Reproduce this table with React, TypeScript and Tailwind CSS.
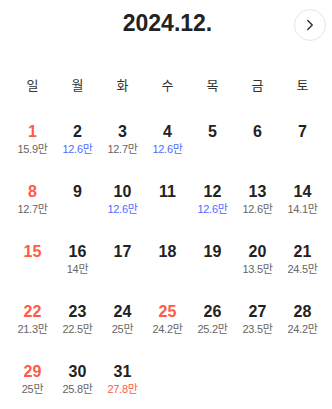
import { ChevronRight } from "lucide-react";

type Tone = "gray" | "blue" | "red";

interface DayData {
  day: number;
  price?: string;
  tone?: Tone;
}

const WEEKDAYS = ["일", "월", "화", "수", "목", "금", "토"];

const DAYS: DayData[] = [
  { day: 1, price: "15.9만", tone: "gray" },
  { day: 2, price: "12.6만", tone: "blue" },
  { day: 3, price: "12.7만", tone: "gray" },
  { day: 4, price: "12.6만", tone: "blue" },
  { day: 5 },
  { day: 6 },
  { day: 7 },
  { day: 8, price: "12.7만", tone: "gray" },
  { day: 9 },
  { day: 10, price: "12.6만", tone: "blue" },
  { day: 11 },
  { day: 12, price: "12.6만", tone: "blue" },
  { day: 13, price: "12.6만", tone: "gray" },
  { day: 14, price: "14.1만", tone: "gray" },
  { day: 15 },
  { day: 16, price: "14만", tone: "gray" },
  { day: 17 },
  { day: 18 },
  { day: 19 },
  { day: 20, price: "13.5만", tone: "gray" },
  { day: 21, price: "24.5만", tone: "gray" },
  { day: 22, price: "21.3만", tone: "gray" },
  { day: 23, price: "22.5만", tone: "gray" },
  { day: 24, price: "25만", tone: "gray" },
  { day: 25, price: "24.2만", tone: "gray" },
  { day: 26, price: "25.2만", tone: "gray" },
  { day: 27, price: "23.5만", tone: "gray" },
  { day: 28, price: "24.2만", tone: "gray" },
  { day: 29, price: "25만", tone: "gray" },
  { day: 30, price: "25.8만", tone: "gray" },
  { day: 31, price: "27.8만", tone: "red" },
];

// holidays shown in red besides sundays
const HOLIDAYS = [25];

const TONE_CLASS: Record<Tone, string> = {
  gray: "text-[#666666]",
  blue: "text-[#4f6bff]",
  red: "text-[#ff5a47]",
};

function DayCell({ data, index }: { data: DayData; index: number }) {
  const isRed = index % 7 === 0 || HOLIDAYS.includes(data.day);

  return (
    <div className="flex h-[60px] flex-col items-center pt-[15px]">
      <span
        className={`text-[16px] font-bold leading-[18px] ${
          isRed ? "text-[#ff5a47]" : "text-[#222222]"
        }`}
      >
        {data.day}
      </span>
      {data.price ? (
        <span
          className={`mt-px text-[11px] leading-[14px] tracking-[-0.3px] ${
            TONE_CLASS[data.tone ?? "gray"]
          }`}
        >
          {data.price}
        </span>
      ) : null}
    </div>
  );
}

export default function App() {
  return (
    <div
      className="h-[409px] w-[332px] bg-white pl-[10px] pr-[7px]"
      style={{
        fontFamily:
          '"Liberation Sans", Arial, "Noto Sans CJK KR", sans-serif',
      }}
    >
      <div className="relative flex h-[46px] items-center justify-center">
        <h1 className="pt-px text-[23px] font-bold text-[#222222]">
          2024.12.
        </h1>
        <button
          type="button"
          className="absolute -right-px top-[9px] flex h-8 w-8 items-center justify-center rounded-full border border-[#e3e5e8] bg-white text-[#333333]"
        >
          <ChevronRight size={18} strokeWidth={2} />
        </button>
      </div>

      <div className="mt-[30px] grid h-5 grid-cols-7 items-center">
        {WEEKDAYS.map((label) => (
          <span
            key={label}
            className="text-center text-[13px] leading-5 text-[#333333]"
          >
            {label}
          </span>
        ))}
      </div>

      <div className="mt-[12px] grid grid-cols-7">
        {DAYS.map((data, index) => (
          <DayCell key={data.day} data={data} index={index} />
        ))}
      </div>
    </div>
  );
}
